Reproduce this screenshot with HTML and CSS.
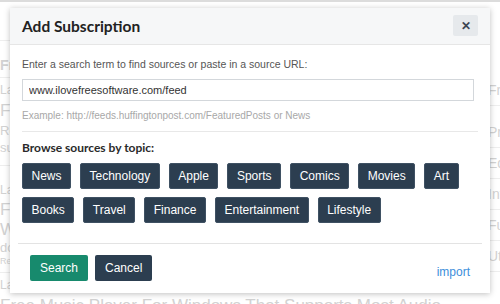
FILE: index.html
```html
<!DOCTYPE html>
<html lang="en">
<head>
    <meta charset="UTF-8">
    <meta name="viewport" content="width=device-width, initial-scale=1.0">
    <title>Add Subscription</title>
    <link rel="stylesheet" href="styles.css">
</head>
<body>
    <div class="page">
        <div class="main">
            <div class="post post-first">
                <h4>Free Software Reviews</h4>
            </div>
            <div class="post">
                <p class="meta">Latest</p>
                <h3>Free RSS Reader Apps</h3>
                <p class="excerpt">Read news from all your favourite sites</p>
                <p class="excerpt">subscribe to feeds and more</p>
            </div>
            <div class="post post-tall">
                <p class="meta">Latest</p>
                <h3>Free Feed Reader For</h3>
                <h3>Windows Desktop</h3>
                <p class="excerpt">download and use it</p>
                <p class="small">Read more</p>
            </div>
            <div class="post">
                <p class="meta">Latest</p>
                <h3>Free Music Player For Windows That Supports Most Audio</h3>
            </div>
        </div>
        <ul class="sidebar">
            <li>Free tools</li>
            <li>Productivity</li>
            <li>Education</li>
            <li>Internet</li>
            <li>Fun apps</li>
            <li>Utilities</li>
        </ul>
    </div>

    <div class="modal">
        <div class="modal-header">
            <h2>Add Subscription</h2>
            <button class="close">&#x2715;</button>
        </div>
        <div class="modal-body">
            <p class="hint">Enter a search term to find sources or paste in a source URL:</p>
            <input class="url" type="text" value="www.ilovefreesoftware.com/feed">
            <p class="example">Example: http://feeds.huffingtonpost.com/FeaturedPosts or News</p>
            <h3 class="browse">Browse sources by topic:</h3>
            <div class="topics">
                <button class="tag">News</button>
                <button class="tag">Technology</button>
                <button class="tag">Apple</button>
                <button class="tag">Sports</button>
                <button class="tag">Comics</button>
                <button class="tag">Movies</button>
                <button class="tag">Art</button>
                <button class="tag">Books</button>
                <button class="tag">Travel</button>
                <button class="tag">Finance</button>
                <button class="tag">Entertainment</button>
                <button class="tag">Lifestyle</button>
            </div>
        </div>
        <div class="modal-footer">
            <button class="btn btn-search">Search</button>
            <button class="btn btn-cancel">Cancel</button>
            <a class="import" href="#">import</a>
        </div>
    </div>
</body>
</html>
```

FILE: styles.css
```css
body {
    margin: 0;
    font-family: "Liberation Sans", Arial, sans-serif;
    background: #fff;
    overflow: hidden;
}

/* faded page behind the dialog */
.page {
    display: grid;
    grid-template-columns: 470px 200px;
    border-top: 2px solid #dcdcdc;
    height: 302px;
    overflow: hidden;
    color: #d2d2d2;
}

.main {
    padding-top: 38px;
}

.post {
    border-top: 1px solid #eee;
    padding: 5px 0 10px;
}

.post-first {
    box-sizing: border-box;
    height: 37px;
    padding: 16px 0 0;
}

.post-tall {
    padding: 17px 0 6px;
}

.post h4 {
    margin: 0;
    font-size: 14px;
    line-height: 16px;
}

.post h3 {
    margin: 0;
    font-size: 17px;
    font-weight: normal;
    line-height: 20px;
    white-space: nowrap;
}

.meta {
    margin: 0 0 4px;
    font-size: 12px;
    line-height: 14px;
}

.post-tall .meta {
    margin-bottom: 3px;
}

.excerpt {
    margin: 2px 0 0;
    font-size: 13px;
    line-height: 15px;
}

.post-tall .excerpt {
    margin: 0;
    line-height: 16px;
}

.small {
    margin: 0;
    font-size: 9px;
    line-height: 10px;
}

.sidebar {
    list-style: none;
    margin: 0;
    padding: 73px 0 0;
    font-size: 14px;
}

.sidebar li {
    height: 30px;
    line-height: 31px;
    border-bottom: 1px solid #eee;
    padding-left: 18px;
}

.sidebar li:first-child {
    margin-bottom: 11px;
}

/* dialog */
.modal {
    position: absolute;
    top: 8px;
    left: 10px;
    width: 480px;
    height: 285px;
    background: #fff;
    box-shadow: 0 1px 6px rgba(0, 0, 0, 0.25);
    display: flex;
    flex-direction: column;
}

.modal-header {
    display: flex;
    justify-content: space-between;
    align-items: flex-start;
    background: #f6f7f8;
    border-bottom: 1px solid #e6e6e6;
    height: 36px;
    padding: 0 12px;
}

.modal-header h2 {
    margin: 0;
    font-family: Lato, sans-serif;
    font-size: 15.5px;
    font-weight: 700;
    line-height: 36px;
    color: #222;
}

.close {
    margin-top: 7px;
    width: 25px;
    height: 21px;
    border: none;
    border-radius: 2px;
    background: #e6e9ec;
    color: #3b4552;
    font-size: 12px;
    font-weight: bold;
    padding: 0;
    cursor: pointer;
}

.modal-body {
    padding: 0 12px;
}

.hint {
    margin: 12px 0 8px;
    font-size: 10.5px;
    line-height: 14px;
    color: #555;
}

.url {
    display: block;
    box-sizing: border-box;
    width: 452px;
    height: 22px;
    margin: 0;
    padding: 0 6px;
    border: 1px solid #d3d7db;
    font-family: "Liberation Sans", Arial, sans-serif;
    font-size: 11px;
    color: #333;
}

.example {
    margin: 8px 0 0;
    padding-bottom: 8px;
    border-bottom: 1px solid #e8e8e8;
    font-size: 10px;
    line-height: 14px;
    color: #a8a8a8;
}

.browse {
    margin: 8px 0 7px;
    font-family: Lato, sans-serif;
    font-size: 12px;
    font-weight: 700;
    line-height: 16px;
    color: #2a2a2a;
}

.topics {
    display: flex;
    flex-wrap: wrap;
    gap: 8px 9px;
    width: 445px;
}

.tag {
    height: 26px;
    padding: 0 8.5px;
    border: 1px solid #3f5163;
    border-radius: 2px;
    background: #2c3e50;
    color: #fff;
    font-family: "Liberation Sans", Arial, sans-serif;
    font-size: 12px;
}

.modal-footer {
    display: flex;
    align-items: center;
    gap: 7px;
    margin: auto 8px 12px;
    padding: 11px 12px 0;
    border-top: 1px solid #e3e3e3;
}

.btn {
    height: 26px;
    padding: 0 10px;
    border: none;
    border-radius: 2px;
    color: #fff;
    font-family: "Liberation Sans", Arial, sans-serif;
    font-size: 12px;
}

.btn-search {
    background: #178a6d;
}

.btn-cancel {
    background: #2c3e50;
}

.import {
    margin-left: auto;
    padding-top: 8px;
    color: #3d8fdb;
    font-size: 12px;
    text-decoration: none;
}
```
